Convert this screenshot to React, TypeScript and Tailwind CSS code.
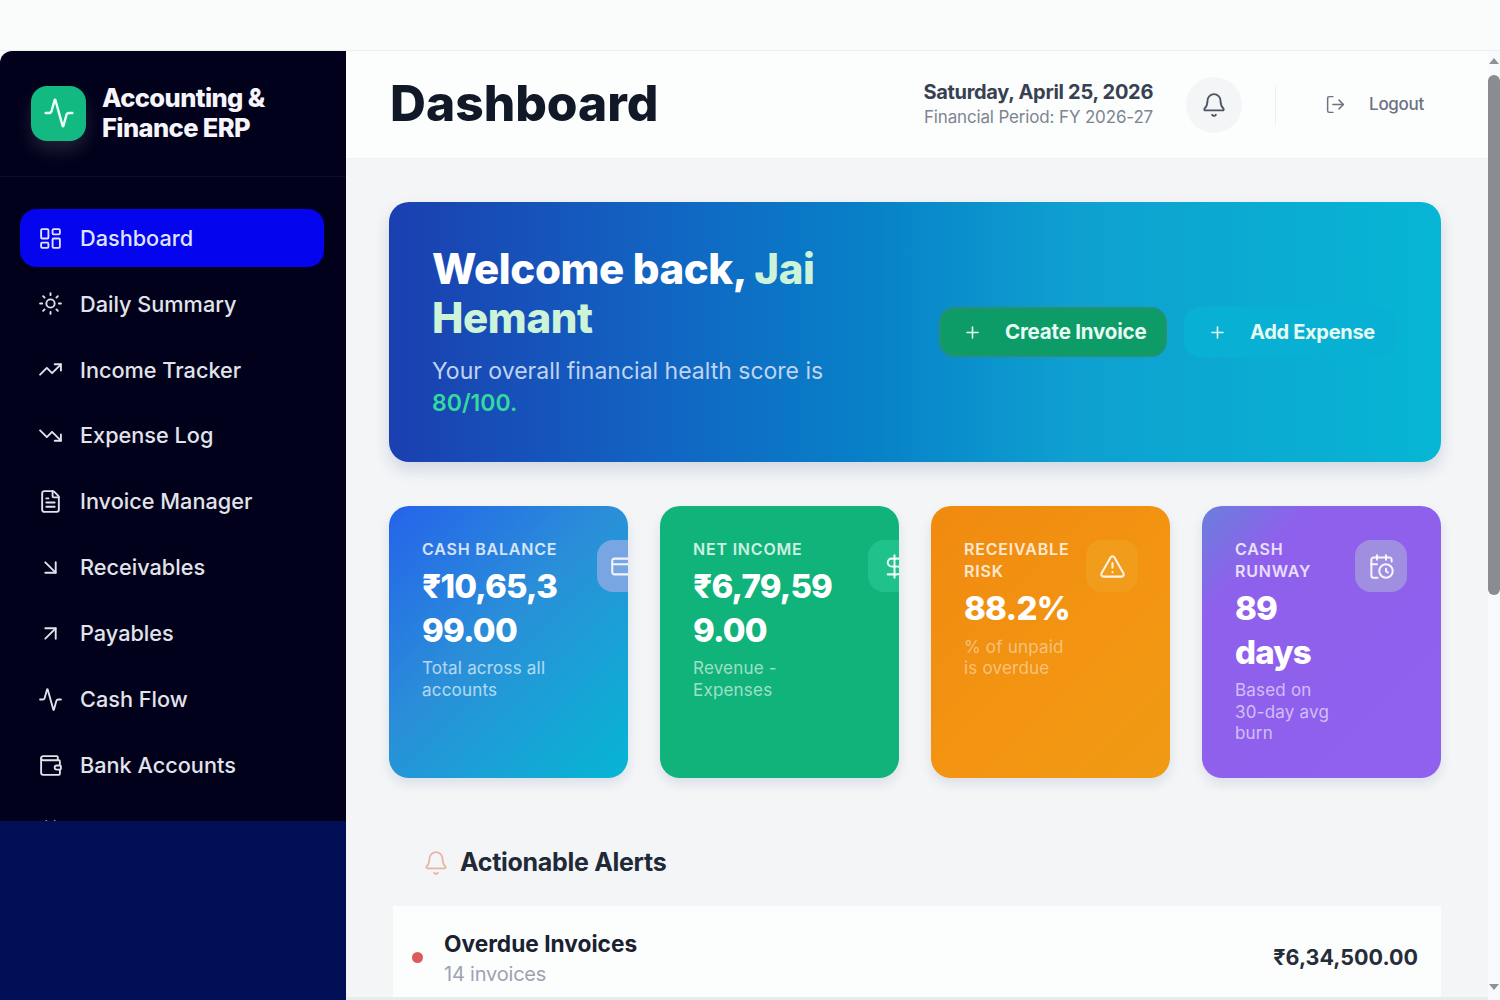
import {
  Activity,
  AlertTriangle,
  ArrowDownRight,
  ArrowUpRight,
  Bell,
  Calendar,
  CalendarClock,
  CreditCard,
  DollarSign,
  FileText,
  LayoutDashboard,
  LogOut,
  Plus,
  Sun,
  TrendingDown,
  TrendingUp,
  Wallet,
} from "lucide-react";

// the last entry only peeks out above the sidebar footer, its label can't be seen
const navItems = [
  { label: "Dashboard", icon: LayoutDashboard, active: true },
  { label: "Daily Summary", icon: Sun },
  { label: "Income Tracker", icon: TrendingUp },
  { label: "Expense Log", icon: TrendingDown },
  { label: "Invoice Manager", icon: FileText },
  { label: "Receivables", icon: ArrowDownRight },
  { label: "Payables", icon: ArrowUpRight },
  { label: "Cash Flow", icon: Activity },
  { label: "Bank Accounts", icon: Wallet },
  { label: "", icon: Calendar },
];

const cards = [
  {
    label: ["CASH BALANCE"],
    value: ["₹10,65,3", "99.00"],
    note: ["Total across all", "accounts"],
    icon: CreditCard,
    bg: "bg-[linear-gradient(135deg,#2563eb_0%,#2a8fd8_45%,#06b6d4_100%)]",
    box: "bg-[#78a6e2]",
    col: "w-[175px]",
    noteColor: "text-white/65",
  },
  {
    label: ["NET INCOME"],
    value: ["₹6,79,59", "9.00"],
    note: ["Revenue -", "Expenses"],
    icon: DollarSign,
    bg: "bg-[#10b37a]",
    box: "bg-[#1fc28a]",
    col: "w-[175px]",
    noteColor: "text-white/60",
  },
  {
    label: ["RECEIVABLE", "RISK"],
    value: ["88.2%"],
    note: ["% of unpaid", "is overdue"],
    icon: AlertTriangle,
    bg: "bg-[linear-gradient(135deg,#f08a10_0%,#f39512_60%,#f09a14_100%)]",
    box: "bg-[#f29c1c]",
    col: "w-[122px]",
    noteColor: "text-white/45",
  },
  {
    label: ["CASH", "RUNWAY"],
    value: ["89", "days"],
    note: ["Based on", "30-day avg", "burn"],
    icon: CalendarClock,
    bg: "bg-[linear-gradient(135deg,#6a7fdc_0%,#8f60ec_22%,#9060ee_100%)]",
    box: "bg-[#a08fe0]",
    col: "w-[120px]",
    noteColor: "text-white/60",
  },
];

function Sidebar() {
  return (
    <aside className="flex w-[346px] shrink-0 flex-col overflow-hidden rounded-tl-xl bg-[#01011b]">
      {/* Brand */}
      <div className="flex h-[126px] shrink-0 items-center gap-4 border-b border-[#0b0c26] pb-[1px] pl-[31px]">
        <div className="flex h-[55px] w-[55px] items-center justify-center rounded-2xl bg-[#12b981] shadow-[0_10px_18px_rgba(255,255,255,0.12)]">
          <Activity size={32} strokeWidth={1.8} className="text-[#e8fff6]" />
        </div>
        <div className="text-[25.5px] leading-[30px] font-extrabold tracking-[-0.6px] text-[#f5f5fa]">
          Accounting &amp;
          <br />
          Finance ERP
        </div>
      </div>

      {/* Nav, cut off by the footer */}
      <nav className="flex h-[644px] shrink-0 flex-col gap-[7.9px] overflow-hidden pt-[32px] pr-[22px] pl-[20px]">
        {navItems.map((item) => (
          <div
            key={item.label}
            className={`flex h-[58px] shrink-0 items-center gap-[17px] rounded-2xl pl-[18px] text-[21.7px] font-medium ${
              item.active ? "bg-[#0404ee] text-[#dfe3fb]" : "text-[#e2e3ea]"
            }`}
          >
            <item.icon size={25} strokeWidth={1.8} className="shrink-0" />
            {item.label && <span>{item.label}</span>}
          </div>
        ))}
      </nav>

      <div className="flex-1 bg-[#020f57]" />
    </aside>
  );
}

function Header() {
  return (
    <header className="flex h-[108px] shrink-0 items-center border-b border-[#eef0f2] bg-[#fcfdfd] pr-[64px] pl-[44px]">
      <h1 className="mb-[3px] text-[49.7px] font-extrabold text-[#111827]">Dashboard</h1>
      <div className="mb-[3px] ml-auto text-right">
        <div className="text-[20px] leading-[28px] font-bold tracking-[-0.3px] text-[#374151]">
          Saturday, April 25, 2026
        </div>
        <div className="text-[17px] leading-[22px] tracking-[-0.15px] text-[#7d8591]">
          Financial Period: FY 2026-27
        </div>
      </div>
      <div className="ml-[33px] flex h-[56px] w-[56px] items-center justify-center rounded-full bg-[#f4f5f6]">
        <Bell size={26} strokeWidth={1.7} className="text-[#4b5563]" />
      </div>
      <div className="ml-[33px] h-[40px] w-px bg-[#eceef0]" />
      <LogOut size={21} strokeWidth={1.7} className="ml-[49px] text-[#6b7280]" />
      <span className="ml-[23px] text-[17px] font-medium tracking-[-0.3px] text-[#6b7280]">Logout</span>
    </header>
  );
}

function Hero() {
  return (
    <section className="flex h-[260px] items-center rounded-[20px] bg-[linear-gradient(90deg,#1b3fb0_0%,#1263c2_25%,#0780c8_45%,#0ea0d0_65%,#07b6d4_100%)] pr-[44px] pl-[43px] shadow-[0_8px_16px_rgba(15,40,90,0.14)]">
      <div className="mb-[2px] w-[430px]">
        <h2 className="text-[42px] leading-[49px] font-extrabold tracking-[-0.4px] whitespace-nowrap text-white">
          Welcome back, <span className="text-[#cdf3d8]">Jai</span>
          <br />
          <span className="text-[#cdf3d8]">Hemant</span>
        </h2>
        <p className="mt-[13px] text-[23px] leading-[32px] whitespace-nowrap text-[#c0d4f0]">
          Your overall financial health score is
          <br />
          <span className="font-semibold text-[#34d9a0]">80/100.</span>
        </p>
      </div>
      <div className="ml-auto flex items-center gap-[17px]">
        <button className="flex h-[50px] w-[228px] items-center rounded-2xl border-2 border-[#27906f] bg-[#0d9b68] pl-[22px] text-[20.5px] font-bold tracking-[-0.2px] whitespace-nowrap text-[#e8fbf3]">
          <Plus size={19} strokeWidth={2} />
          <span className="ml-[23px]">Create Invoice</span>
        </button>
        <button className="flex h-[50px] w-[213px] items-center rounded-2xl bg-[#08b1d4] pl-[24px] text-[20px] font-bold tracking-[-0.3px] whitespace-nowrap text-[#e8fbf3]">
          <Plus size={19} strokeWidth={2} />
          <span className="ml-[23px]">Add Expense</span>
        </button>
      </div>
    </section>
  );
}

function StatCard({ card }: { card: (typeof cards)[number] }) {
  const Icon = card.icon;
  return (
    <div className={`flex h-[272px] overflow-hidden rounded-[20px] pt-[32px] pl-[33px] shadow-[0_6px_12px_rgba(15,40,90,0.1)] ${card.bg}`}>
      <div className={`shrink-0 ${card.col}`}>
        <div className="text-[16px] leading-[22px] font-semibold tracking-[0.8px] text-white/80">
          {card.label.map((l) => (
            <div key={l}>{l}</div>
          ))}
        </div>
        <div className="mt-[5px] text-[33px] leading-[43.5px] font-extrabold tracking-[-0.8px] whitespace-nowrap text-white">
          {card.value.map((l) => (
            <div key={l}>{l}</div>
          ))}
        </div>
        <div className={`mt-[6px] text-[17px] leading-[21.5px] tracking-[0.2px] whitespace-nowrap ${card.noteColor}`}>
          {card.note.map((l) => (
            <div key={l}>{l}</div>
          ))}
        </div>
      </div>
      <div className={`mt-[2px] flex h-[52px] w-[52px] shrink-0 items-center justify-center rounded-2xl ${card.box}`}>
        <Icon size={27} strokeWidth={1.8} className="text-white/90" />
      </div>
    </div>
  );
}

function Alerts() {
  return (
    <section className="mt-[66px]">
      <div className="flex items-center gap-[11px] pl-[34px]">
        <Bell size={26} strokeWidth={1.6} className="text-[#e8b4a4]" />
        <h3 className="text-[25px] font-bold tracking-[-0.3px] text-[#1f2937]">Actionable Alerts</h3>
      </div>
      <div className="mt-[24px] ml-[4px] flex h-[103px] items-center bg-[#fcfdfd] pr-[23px] pl-[19px]">
        <span className="h-[11px] w-[11px] rounded-full bg-[#db5a5a]" />
        <div className="mt-[3px] ml-[21px]">
          <div className="text-[22.7px] leading-[31px] font-bold text-[#1a2130]">Overdue Invoices</div>
          <div className="text-[20px] leading-[31px] tracking-[-0.2px] text-[#9ca3af]">14 invoices</div>
        </div>
        <div className="ml-auto text-[21.5px] font-bold text-[#262d3a]">₹6,34,500.00</div>
      </div>
    </section>
  );
}

function ScrollBar() {
  return (
    <div className="flex w-[12px] shrink-0 flex-col items-center bg-[#f8f9fa] pt-[7px] pb-[10px]">
      <div className="h-0 w-0 border-x-[5px] border-b-[6px] border-x-transparent border-b-[#8e9196]" />
      <div className="mt-[11px] h-[520px] w-[12px] rounded-full bg-[#898c90]" />
      <div className="mt-auto h-0 w-0 border-x-[5px] border-t-[6px] border-x-transparent border-t-[#8e9196]" />
    </div>
  );
}

export default function App() {
  return (
    <div className="flex h-[1000px] flex-col overflow-hidden bg-[#fafbfb] font-['Inter','Liberation_Sans',sans-serif]">
      <div className="h-[51px] shrink-0 border-b border-[#eceef0]" />
      <div className="flex min-h-0 flex-1">
        <Sidebar />
        <main className="flex min-w-0 flex-1 flex-col overflow-hidden border-b-[3px] border-[#e9ebed] bg-[#f3f5f7]">
          <Header />
          <div className="pt-[43px] pr-[47px] pl-[43px]">
            <Hero />
            <div className="mt-[44px] grid grid-cols-4 gap-[32px]">
              {cards.map((card) => (
                <StatCard key={card.label.join(" ")} card={card} />
              ))}
            </div>
            <Alerts />
          </div>
        </main>
        <ScrollBar />
      </div>
    </div>
  );
}
